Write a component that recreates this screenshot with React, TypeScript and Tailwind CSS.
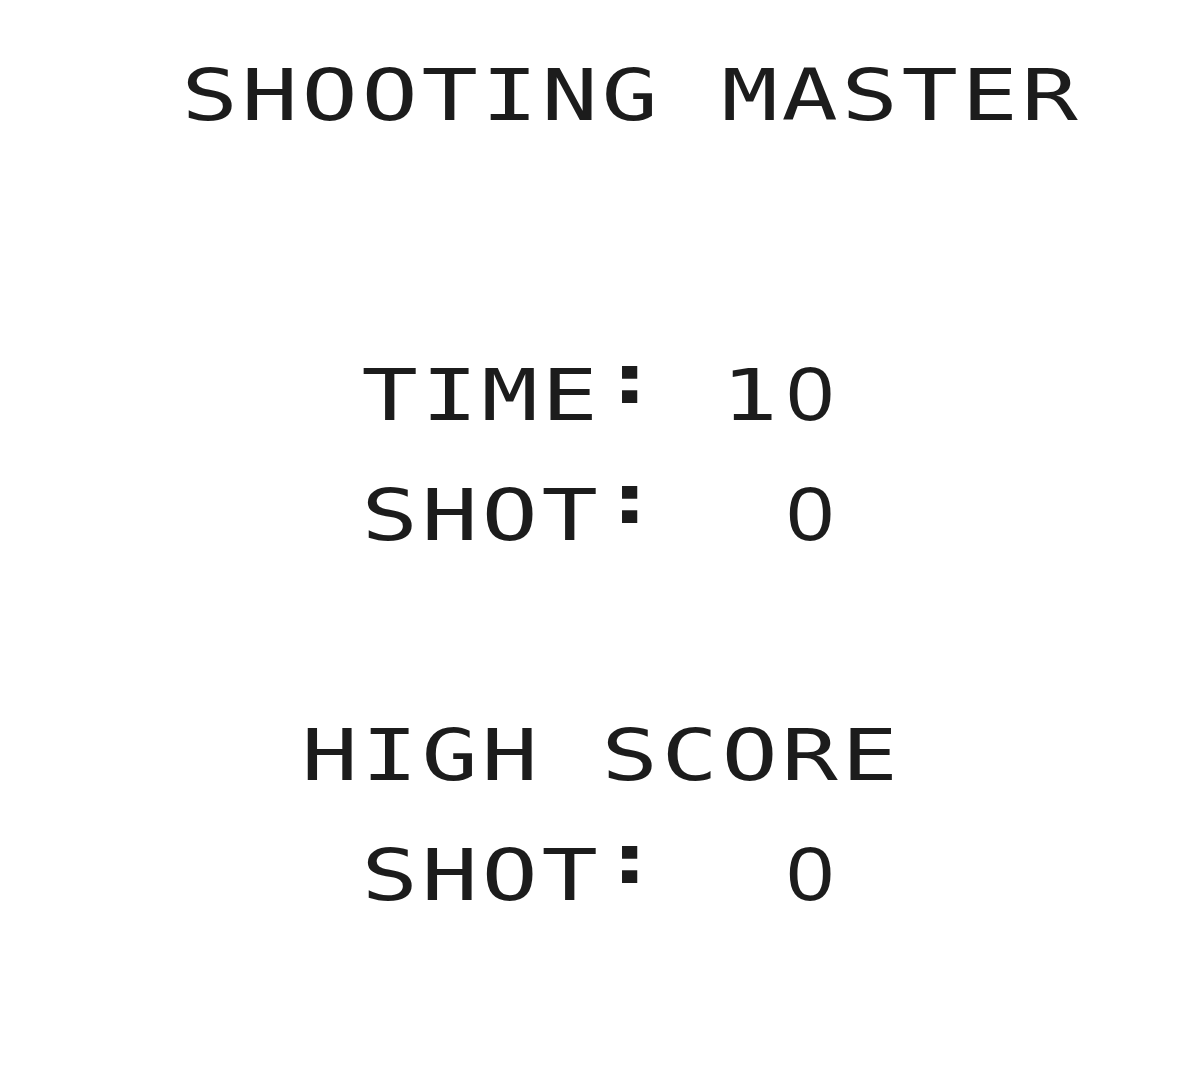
const COLS = 20;

// 20x18 tile screen, one character per tile
const screen: string[] = [
  "",
  "   SHOOTING MASTER",
  "",
  "",
  "",
  "",
  "      TIME: 10",
  "",
  "      SHOT:  0",
  "",
  "",
  "",
  "     HIGH SCORE",
  "",
  "      SHOT:  0",
  "",
  "",
  "",
];

const Tile = ({ ch }: { ch: string }) => {
  let glyph = "scale-x-[1.3] translate-y-[5px] text-[72px]";
  if (ch === "0") {
    // plain zero, no dot
    glyph = "scale-x-[1.12] translate-y-[4px] text-[76px] font-['Liberation_Sans',sans-serif]";
  } else if (ch === ":") {
    // colon sits high in the tile
    glyph = "scale-x-[1.3] -translate-y-[12px] text-[72px] font-bold";
  }

  return (
    <div className="w-[60px] h-[60px] flex items-center justify-center">
      <span className={`inline-block leading-none text-[#1c1c1c] ${glyph}`}>
        {ch === " " ? "\u00a0" : ch}
      </span>
    </div>
  );
};

const App = () => {
  return (
    <div
      className="w-[1200px] h-[1080px] bg-white flex flex-col overflow-hidden"
      style={{ fontFamily: '"DejaVu Sans Mono", "Liberation Mono", monospace' }}
    >
      {screen.map((line, row) => (
        <div key={row} className="flex h-[60px]">
          {line
            .padEnd(COLS, " ")
            .split("")
            .map((ch, col) => (
              <Tile key={col} ch={ch} />
            ))}
        </div>
      ))}
    </div>
  );
};

export default App;
